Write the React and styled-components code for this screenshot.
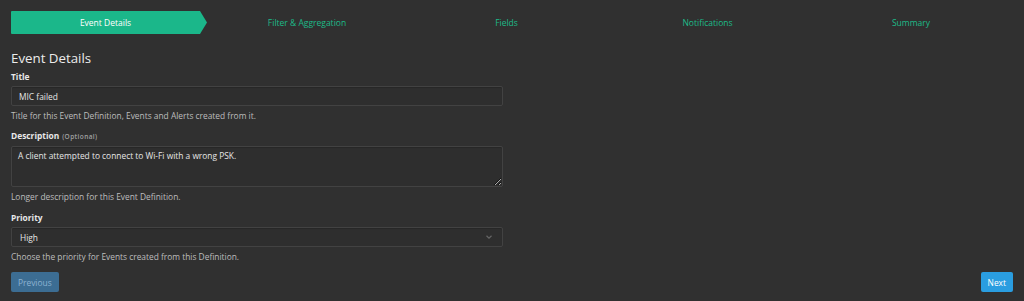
import React from "react";
import styled, { createGlobalStyle } from "styled-components";

const Global = createGlobalStyle`
  html, body { margin: 0; padding: 0; background: #303030; }
  body { font-family: "Open Sans", "Noto Sans", sans-serif; color: #e0e0e0; }
  * { box-sizing: border-box; }
`;

const Page = styled.div`
  width: 1024px;
  height: 301px;
  padding: 11px 11px 0 11px;
  background: #303030;
  overflow: hidden;
`;

const Steps = styled.div`
  display: grid;
  grid-template-columns: 196px 200px 199px 203px 1fr;
  height: 23px;
  align-items: center;
`;

const Step = styled.div`
  height: 23px;
  display: flex;
  align-items: center;
  justify-content: center;
  font-size: 8.5px;
  color: ${(p) => (p.$active ? "#ffffff" : "#1dbb89")};
  background: ${(p) => (p.$active ? "#1bb78a" : "transparent")};
  clip-path: ${(p) =>
    p.$active
      ? "polygon(0 0, calc(100% - 7px) 0, 100% 50%, calc(100% - 7px) 100%, 0 100%)"
      : "none"};
  padding-right: ${(p) => (p.$active ? "7px" : "0")};
  border-radius: 1px;
`;

const Heading = styled.h2`
  margin: 16px 0 0 0;
  font-size: 13.3px;
  line-height: 17px;
  font-weight: 400;
  color: #ececec;
`;

const Group = styled.div`
  margin-top: ${(p) => p.$top}px;
`;

const Label = styled.div`
  font-size: 8.4px;
  line-height: 10px;
  font-weight: 700;
  color: #e8e8e8;
  margin-bottom: 4px;
`;

const Optional = styled.span`
  font-size: 6.5px;
  font-weight: 600;
  letter-spacing: 0.4px;
  color: #a0a0a0;
  margin-left: 3px;
`;

const fieldStyles = `
  display: block;
  width: 492px;
  background: #2e2e2e;
  border: 1px solid #424242;
  border-radius: 2px;
  color: #e6e6e6;
  font-family: "Open Sans", "Noto Sans", sans-serif;
  font-size: 8.4px;
  padding: 0 7px;
  outline: none;
  box-shadow: inset 0 1px 1px rgba(0,0,0,0.15);
`;

const Input = styled.input`
  ${fieldStyles}
  height: 20px;
`;

const TextArea = styled.textarea`
  ${fieldStyles}
  height: 41px;
  padding: 3px 6px;
  line-height: 11px;
  resize: vertical;
`;

const Select = styled.div`
  ${fieldStyles}
  height: 20px;
  display: flex;
  align-items: center;
  justify-content: space-between;
  padding: 0 9px 0 8px;
`;

const Help = styled.div`
  font-size: 8.4px;
  line-height: 10px;
  color: #bdbdbd;
  margin-top: 5px;
`;

const Footer = styled.div`
  display: flex;
  justify-content: space-between;
  margin-top: 10px;
`;

const Button = styled.button`
  height: 20px;
  padding: 0 7px;
  border: none;
  border-radius: 2px;
  font-family: "Open Sans", "Noto Sans", sans-serif;
  font-size: 8.4px;
  background: ${(p) => (p.$disabled ? "#3c6d93" : "#2a9de0")};
  color: ${(p) => (p.$disabled ? "#8db3d2" : "#ffffff")};
`;

export default function App() {
  return (
    <>
      <Global />
      <Page>
        <Steps>
          <Step $active>Event Details</Step>
          <Step>Filter &amp; Aggregation</Step>
          <Step>Fields</Step>
          <Step>Notifications</Step>
          <Step>Summary</Step>
        </Steps>
        <Heading>Event Details</Heading>
        <Group $top={5}>
          <Label>Title</Label>
          <Input readOnly value="MIC failed" />
          <Help>Title for this Event Definition, Events and Alerts created from it.</Help>
        </Group>
        <Group $top={10}>
          <Label>
            Description<Optional>(Optional)</Optional>
          </Label>
          <TextArea readOnly value="A client attempted to connect to Wi-Fi with a wrong PSK." />
          <Help>Longer description for this Event Definition.</Help>
        </Group>
        <Group $top={11}>
          <Label>Priority</Label>
          <Select>
            <span>High</span>
            <svg width="8" height="6" viewBox="0 0 8 6">
              <path d="M1.5 1.8 L4 4.2 L6.5 1.8" fill="none" stroke="#666" strokeWidth="1.2" />
            </svg>
          </Select>
          <Help>Choose the priority for Events created from this Definition.</Help>
        </Group>
        <Footer>
          <Button $disabled>Previous</Button>
          <Button>Next</Button>
        </Footer>
      </Page>
    </>
  );
}
